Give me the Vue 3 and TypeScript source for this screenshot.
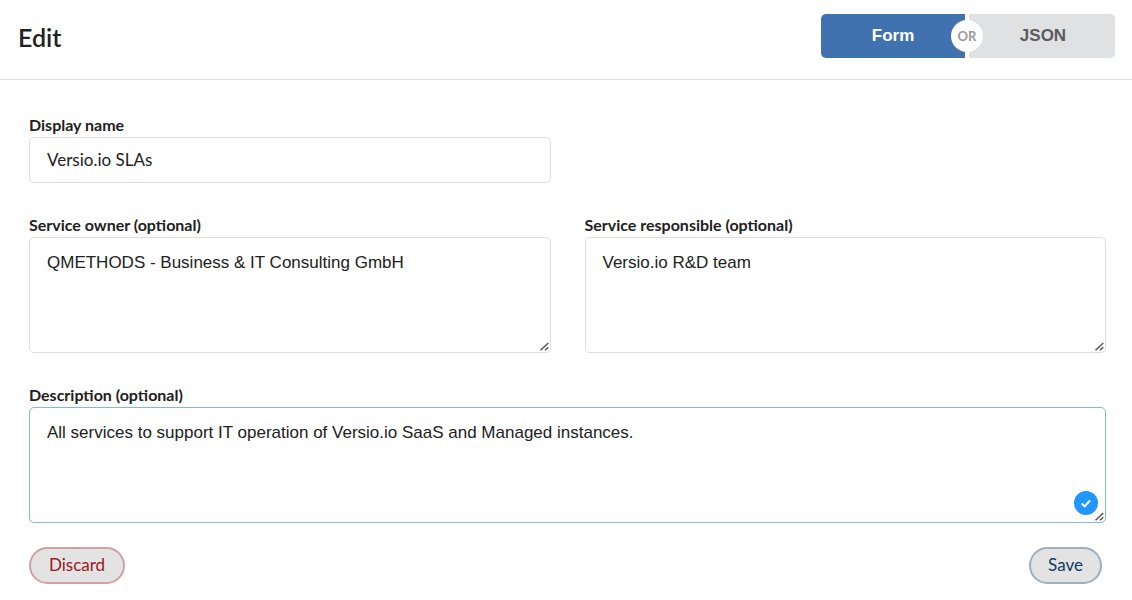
<script setup lang="ts">
import { ref } from 'vue'

const mode = ref<'form' | 'json'>('form')
const displayName = ref('Versio.io SLAs')
const owner = ref('QMETHODS - Business & IT Consulting GmbH')
const responsible = ref('Versio.io R&D team')
const description = ref('All services to support IT operation of Versio.io SaaS and Managed instances.')
</script>

<template>
  <main class="editor">
    <header class="header">
      <h1 class="title">Edit</h1>
      <div class="modes">
        <button type="button" class="mode" :class="{ active: mode === 'form' }" @click="mode = 'form'">Form</button>
        <span class="or">OR</span>
        <button type="button" class="mode" :class="{ active: mode === 'json' }" @click="mode = 'json'">JSON</button>
      </div>
    </header>

    <form class="form" @submit.prevent>
      <div class="field">
        <label for="display-name">Display name</label>
        <input id="display-name" v-model="displayName" type="text" class="control" />
      </div>
      <div class="field start">
        <label for="owner">Service owner (optional)</label>
        <div class="area">
          <textarea id="owner" v-model="owner" class="control"></textarea>
          <svg class="grip" viewBox="0 0 9 9" aria-hidden="true"><path d="M0.5 8.3L8.3 1M5 8.3L8.3 5.2" /></svg>
        </div>
      </div>
      <div class="field">
        <label for="responsible">Service responsible (optional)</label>
        <div class="area">
          <textarea id="responsible" v-model="responsible" class="control"></textarea>
          <svg class="grip" viewBox="0 0 9 9" aria-hidden="true"><path d="M0.5 8.3L8.3 1M5 8.3L8.3 5.2" /></svg>
        </div>
      </div>
      <div class="field wide">
        <label for="description">Description (optional)</label>
        <div class="area">
          <textarea id="description" v-model="description" class="control current"></textarea>
          <svg class="check" viewBox="0 0 24 24" aria-hidden="true">
            <circle cx="12" cy="12" r="12" />
            <path d="M8.3 13L10.7 15.4L15.6 10" />
          </svg>
          <svg class="grip" viewBox="0 0 9 9" aria-hidden="true"><path d="M0.5 8.3L8.3 1M5 8.3L8.3 5.2" /></svg>
        </div>
      </div>
      <div class="actions">
        <button type="button" class="action discard">Discard</button>
        <button type="submit" class="action save">Save</button>
      </div>
    </form>
  </main>
</template>

<style>
body {
  margin: 0;
  background: #fff;
}
</style>

<style scoped>
.editor {
  font-family: Lato, "Liberation Sans", sans-serif;
  color: #212121;
}
.header {
  display: flex;
  align-items: flex-start;
  justify-content: space-between;
  padding: 14px 17px 19px 18px;
  border-bottom: 1px solid #dcddde;
}
.title {
  margin: 0;
  font-size: 25px;
  font-weight: 600;
  line-height: 46px;
}
.modes {
  position: relative;
  display: grid;
  grid-template-columns: 144px 146px;
  column-gap: 4px;
}
.mode {
  height: 44px;
  padding: 0;
  border: 0;
  border-radius: 0 5px 5px 0;
  background: #e0e1e2;
  color: #5a5b5c;
  font: bold 17px/20px "Liberation Sans", Arial, sans-serif;
}
.mode:first-child {
  border-radius: 5px 0 0 5px;
}
.mode:last-child {
  padding-left: 2px;
}
.mode.active {
  background: #4072b0;
  color: #fff;
}
.or {
  position: absolute;
  top: 6px;
  left: 130px;
  width: 32px;
  height: 32px;
  border-radius: 50%;
  background: #fff;
  color: #999;
  font-size: 13px;
  font-weight: 700;
  line-height: 33px;
  text-align: center;
}
.form {
  display: grid;
  grid-template-columns: 1fr 1fr;
  gap: 30px 34px;
  padding: 33px 26px 16px 29px;
}
.field {
  display: flex;
  flex-direction: column;
  min-width: 0;
}
.start {
  grid-column: 1;
}
.wide,
.actions {
  grid-column: 1 / -1;
}
label {
  font-size: 16px;
  font-weight: 700;
  line-height: 24px;
}
.control {
  display: block;
  box-sizing: border-box;
  width: 100%;
  height: 46px;
  margin: 0;
  padding: 0 17px 2px;
  border: 1px solid #dededf;
  border-radius: 5px;
  outline: none;
  background: #fff;
  color: #212121;
  font: 17px/22px Lato, sans-serif;
}
textarea.control {
  height: 116px;
  padding: 14px 17px;
  resize: none;
  font-family: "Liberation Sans", Arial, sans-serif;
}
.control.current {
  border-color: #85b7d9;
}
.area {
  position: relative;
}
.grip {
  position: absolute;
  right: 2px;
  bottom: 2px;
  width: 9px;
  height: 9px;
  fill: none;
  stroke: #555;
  stroke-width: 1.5;
}
.check {
  position: absolute;
  right: 8px;
  bottom: 8px;
  width: 24px;
  height: 24px;
  fill: #2196ff;
}
.check path {
  fill: none;
  stroke: #fff;
  stroke-width: 2;
  stroke-linecap: round;
}
.actions {
  display: flex;
  justify-content: space-between;
  margin-top: -6px;
  padding-right: 4px;
}
.action {
  height: 37px;
  padding: 0 17px 2px;
  border: 2px solid;
  border-radius: 19px;
  background: #e3e3e3;
  font: 17px/22px Lato, sans-serif;
}
.discard {
  padding: 0 18px 2px;
  border-color: #d0a1a3;
  color: #9f161c;
}
.save {
  border-color: #9eafbd;
  color: #0d3b61;
}
</style>
